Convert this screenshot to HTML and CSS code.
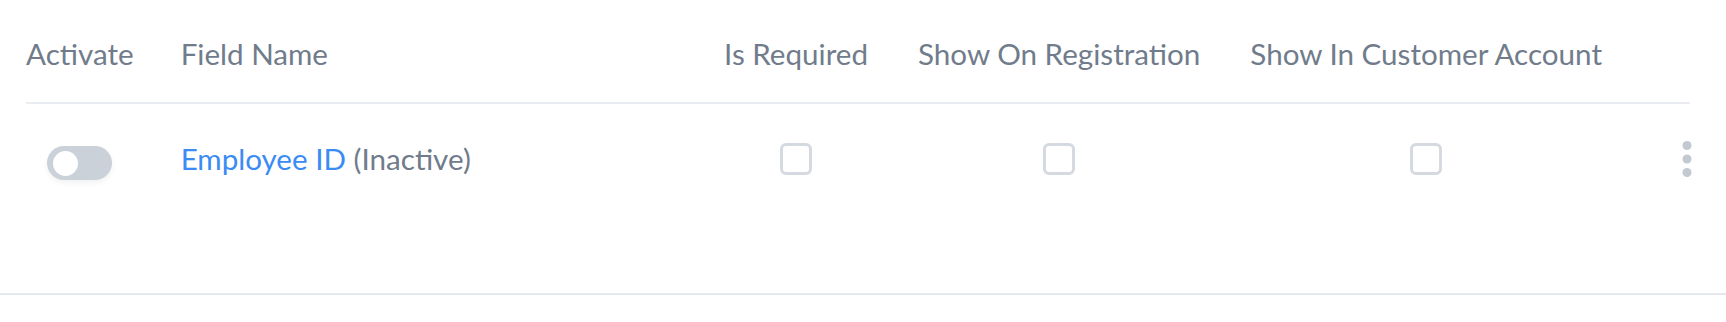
FILE: index.html
```html
<!DOCTYPE html>
<html lang="en">
<head>
<meta charset="utf-8">
<title>Custom Fields</title>
<link rel="stylesheet" href="styles.css">
</head>
<body>
<div class="panel">
  <div class="fields-table">
    <div class="th th-center">Activate</div>
    <div class="th th-name">Field Name</div>
    <div class="th th-center">Is Required</div>
    <div class="th th-center">Show On Registration</div>
    <div class="th th-center">Show In Customer Account</div>
    <div class="th th-last"></div>

    <div class="td td-center td-first"><span class="toggle"><span class="toggle-knob"></span></span></div>
    <div class="td td-name"><a class="field-link" href="#">Employee ID</a>&nbsp;<span class="field-status">(Inactive)</span></div>
    <div class="td td-center"><span class="checkbox"></span></div>
    <div class="td td-center"><span class="checkbox"></span></div>
    <div class="td td-center"><span class="checkbox"></span></div>
    <div class="td td-last">
      <svg class="kebab" width="10" height="37" viewBox="0 0 10 37" aria-hidden="true">
        <circle cx="5" cy="4.5" r="4.5"/>
        <circle cx="5" cy="18" r="4.5"/>
        <circle cx="5" cy="31.5" r="4.5"/>
      </svg>
    </div>
  </div>
</div>
</body>
</html>
```
FILE: styles.css
```css
* { box-sizing: border-box; }

body {
  margin: 0;
  background: #ffffff;
  font-family: "Lato", "Open Sans", sans-serif;
  font-size: 29.6px;
  color: #707c8b;
}

.panel {
  height: 295px;
  border-bottom: 2px solid #e5e8ec;
}

.fields-table {
  margin: 0 36px 0 26px;
  display: grid;
  grid-template-columns: auto 1fr auto auto auto 63px;
}

.th {
  padding: 34px 25px 28px;
  line-height: 40px;
  white-space: nowrap;
  border-bottom: 2px solid #e9ecf0;
  color: #707c8b;
}

.th:first-child { padding-left: 0; }

.th-center { text-align: center; }

.th-name,
.td-name { padding-left: 22px; }

.th-last { padding-right: 0; }

.td {
  height: 110px;
  padding: 0 25px;
  display: flex;
  align-items: center;
  line-height: 40px;
  white-space: nowrap;
}

.td.td-name { padding-left: 22px; }

.td-center { justify-content: center; }

.td.td-first { padding-left: 0; }

.td-last {
  padding-right: 0;
  justify-content: flex-end;
}

.toggle {
  width: 65px;
  height: 34px;
  margin-top: 8px;
  border-radius: 17px;
  background: #cbd1d9;
  box-shadow: 0 3px 5px rgba(60, 70, 90, 0.07);
  display: flex;
  align-items: center;
  padding-left: 6px;
}

.toggle-knob {
  width: 25px;
  height: 25px;
  border-radius: 50%;
  background: #ffffff;
}

.field-link {
  color: #3a8bf5;
  text-decoration: none;
}

.field-status {
  color: #707c8b;
}

.checkbox {
  width: 32px;
  height: 32px;
  border: 3px solid #d5d9e0;
  border-radius: 6px;
  background: #ffffff;
}

.kebab {
  display: block;
  margin-right: -2px;
  fill: #c3c9d1;
}
```
